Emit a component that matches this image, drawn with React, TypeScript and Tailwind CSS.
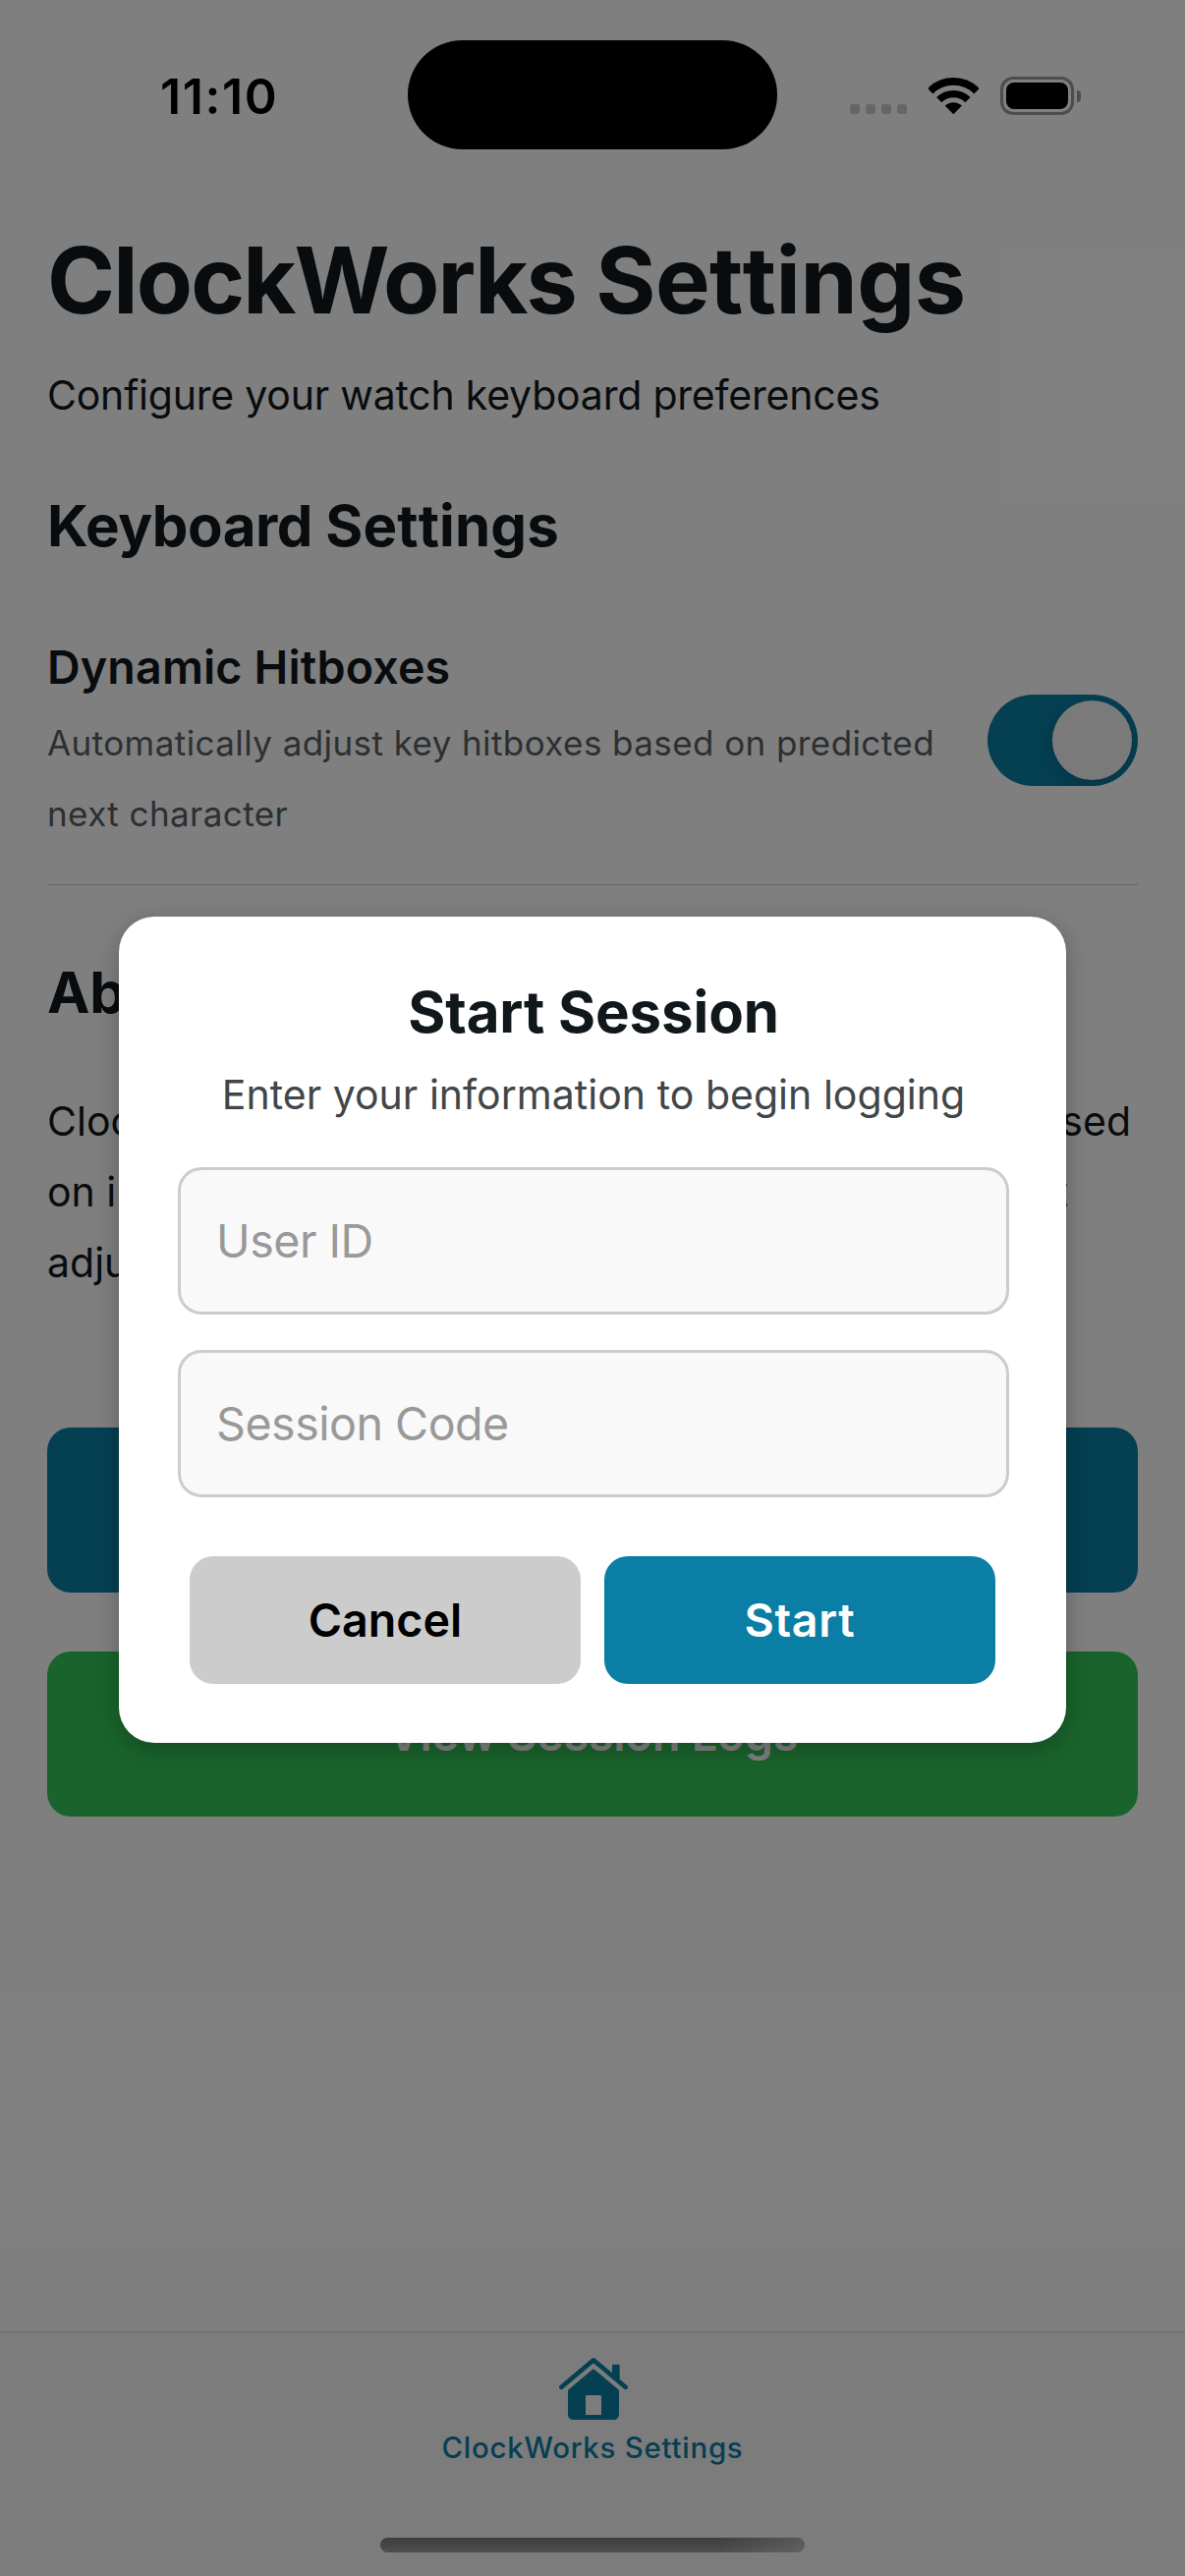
import type { ReactNode } from 'react';

function StatusBar() {
  return (
    <header className="flex h-[177px] shrink-0 items-start pl-[163px]">
      <time className="mt-[62px] w-[252px] text-[50px] leading-[72px] font-semibold tracking-[1.6px] text-black">11:10</time>
      <div className="mt-[41px] h-[111px] w-[376px] rounded-full bg-black" />
      <div className="mt-[78px] ml-[74px] flex h-[39px] items-start">
        <div className="mt-7 mr-[22px] flex gap-1.5">
          {[0, 1, 2, 3].map((i) => (
            <span key={i} className="size-2.5 rounded-[3px] bg-[#cccccc]" />
          ))}
        </div>
        <svg className="mt-px h-[38px] w-[51px]" viewBox="375 86 153 114" fill="none">
          <path d="M380 127A100.500 100.500 0 0 1 522 127" stroke="#000" strokeWidth="23" />
          <path d="M407 154A62 62 0 0 1 495 154" stroke="#000" strokeWidth="22" />
          <path d="M451 198L425.500 172.500A36 36 0 0 1 476.500 172.500Z" fill="#000" />
        </svg>
        <div className="ml-[22px] flex items-center">
          <div className="h-[39px] w-[75px] rounded-[13px] border-[3px] border-[#9a9a9a] p-[3px]">
            <div className="h-[27px] w-[63px] rounded-[8px] bg-black" />
          </div>
          <div className="ml-[3px] h-3 w-1 rounded-r-full bg-[#9a9a9a]" />
        </div>
      </div>
    </header>
  );
}

function Heading({ className, children }: { className: string; children: ReactNode }) {
  return (
    <h2 className={`text-[58.2px] leading-[72px] font-bold tracking-[-0.1px] ${className}`}>{children}</h2>
  );
}

function HomeIcon() {
  return (
    <svg className="ml-0.5 h-[63px] w-[70px]" viewBox="627 150 210 189" fill="#0a7ea4">
      <path d="M634 239L732 157L830 239" fill="none" stroke="#0a7ea4" strokeWidth="14" strokeLinecap="round" strokeLinejoin="round" />
      <path d="M789 200V174Q789 170 793 170H808Q812 170 812 174V222Z" />
      <path fillRule="evenodd" d="M732 183L810 248V321Q810 339 792 339H672Q654 339 654 321V248ZM712 264Q708 264 708 268V324H756V268Q756 264 752 264Z" />
    </svg>
  );
}

function Field({ placeholder }: { placeholder: string }) {
  return (
    <input
      placeholder={placeholder}
      className="h-[150px] w-full rounded-[24px] border-[3px] border-[#cccccc] bg-[#f9f9f9] px-9 text-[46.6px] tracking-[-0.5px] outline-none placeholder:text-[#999999] placeholder:opacity-100"
    />
  );
}

function StartSessionModal() {
  return (
    <div className="absolute inset-0 flex items-start justify-center bg-black/50 pt-[933px]">
      <div className="flex h-[841px] w-[964px] flex-col rounded-[36px] bg-white pt-[61px] pr-[58px] pl-[60px] text-center shadow-[0_6px_24px_rgba(0,0,0,0.25)]">
        <Heading className="">Start Session</Heading>
        <p className="mt-3 text-[41px] leading-[72px] tracking-[0.03px] text-[#414649]">
          Enter your information to begin logging
        </p>
        <div className="mt-[38px] flex flex-col gap-9">
          <Field placeholder="User ID" />
          <Field placeholder="Session Code" />
        </div>
        <div className="mt-[60px] flex gap-6 pl-3">
          <button className="h-[130px] w-[398px] rounded-[24px] bg-[#cccccc] pt-0.5 text-[46.6px] font-semibold text-black">Cancel</button>
          <button className="h-[130px] w-[398px] rounded-[24px] bg-[#0a7ea4] pt-0.5 text-[46.6px] font-semibold tracking-[0.7px] text-white">Start</button>
        </div>
      </div>
    </div>
  );
}

export default function App() {
  return (
    <div className="relative flex h-[2622px] w-[1206px] flex-col overflow-hidden bg-white font-['Inter',sans-serif] text-[#11181c]">
      <StatusBar />
      <main className="flex flex-1 flex-col px-12 pt-[60px]">
        <h1 className="text-[93.5px] leading-[96px] font-bold tracking-[-1.9px] whitespace-nowrap">
          ClockWorks <span className="tracking-[-0.5px] [font-kerning:none]">Settings</span>
        </h1>
        <p className="mt-[33px] text-[41px] leading-[72px] tracking-[-0.21px]">Configure your watch keyboard preferences</p>
        <Heading className="mt-[61px]">
          <span className="tracking-[-0.5px]">Keyboard </span>
          <span className="tracking-[0.1px] [font-kerning:none]">Settings</span>
        </Heading>
        <section className="mt-[72px] flex items-center justify-between border-b border-[#cccccc] pb-9">
          <div>
            <h3 className="text-[46.6px] leading-[72px] font-semibold tracking-[0.15px]">Dynamic Hitboxes</h3>
            <p className="mt-[5px] text-[35px] leading-[72px] tracking-[0.42px] text-[#5a5e61]">
              Automatically adjust key hitboxes based on predicted
              <br />
              next character
            </p>
          </div>
          <div className="flex h-[93px] w-[153px] items-center justify-end overflow-hidden rounded-full bg-[#0a7ea4] p-1.5">
            <div className="size-[81px] rounded-full bg-[#f4f4f4] shadow-[0_6px_20px_rgba(0,0,0,0.15)]" />
          </div>
        </section>
        <Heading className="mt-[73px]">About</Heading>
        <div className="mt-[59px] text-[41px] leading-[72px] whitespace-nowrap">
          <p className="flex w-[1103px] justify-between">
            <span>ClockWorks is a watch keyboard</span>
            <span>that adapts based</span>
          </p>
          <p className="flex w-[1039px] justify-between">
            <span>on input prediction. Hitboxes</span>
            <span>for the next</span>
          </p>
          <p>adjust as you type.</p>
        </div>
        <button className="mt-[132px] h-[168px] shrink-0 rounded-[24px] bg-[#0a7ea4] text-[46.6px] font-semibold text-white">Start Session</button>
        <button className="mt-[60px] h-[168px] shrink-0 rounded-[24px] bg-[#34c759] pt-0.5 text-[46.6px] font-semibold tracking-[-0.3px] text-white">View Session Logs</button>
      </main>
      <nav className="flex h-[249px] shrink-0 flex-col items-center border-t border-[#d0d0d0] bg-[#f8f8f8] pt-[26px]">
        <HomeIcon />
        <span className="mt-[11px] text-[29.400px] leading-9 font-medium tracking-[0.77px] text-[#0a7ea4]">ClockWorks Settings</span>
        <div className="mt-[73px] h-[15px] w-[432px] rounded-full bg-[linear-gradient(to_right,transparent_80%,rgba(255,255,255,0.4)),linear-gradient(#7c7c7c,#9c9c9c)]" />
      </nav>
      <StartSessionModal />
    </div>
  );
}
